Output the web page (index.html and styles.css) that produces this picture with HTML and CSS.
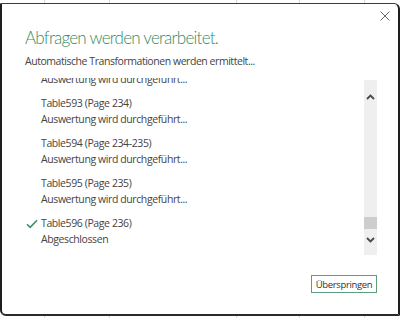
FILE: index.html
```html
<!DOCTYPE html>
<html lang="de">
<head>
<meta charset="utf-8">
<title>Abfragen werden verarbeitet</title>
<link rel="stylesheet" href="styles.css">
</head>
<body>
<div class="grid-strip top">
  <span class="cell c1"></span><span class="cell c2"></span><span class="cell c3"></span><span class="cell c4"></span><span class="cell c5"></span>
</div>
<div class="dialog">
  <button class="close" aria-label="Schließen">
    <svg width="10" height="10" viewBox="0 0 10 10"><path d="M0.5 0.5L9.5 9.5M9.5 0.5L0.5 9.5" stroke="#666" stroke-width="1" fill="none"/></svg>
  </button>
  <h1 class="title">Abfragen werden verarbeitet.</h1>
  <p class="subtitle">Automatische Transformationen werden ermittelt...</p>
  <div class="list-area">
    <div class="list-clip">
      <ul class="list">
        <li class="item partial"><span class="status">Auswertung wird durchgeführt...</span></li>
        <li class="item"><span class="name">Table593 (Page 234)</span><span class="status">Auswertung wird durchgeführt...</span></li>
        <li class="item"><span class="name">Table594 (Page 234-235)</span><span class="status">Auswertung wird durchgeführt...</span></li>
        <li class="item"><span class="name">Table595 (Page 235)</span><span class="status">Auswertung wird durchgeführt...</span></li>
        <li class="item done">
          <svg class="check" width="12" height="10" viewBox="0 0 12 10"><path d="M1 5.2L4.2 8.4L11 1.2" stroke="#3d8f66" stroke-width="1.6" fill="none"/></svg>
          <span class="name">Table596 (Page 236)</span><span class="status">Abgeschlossen</span>
        </li>
      </ul>
    </div>
    <div class="scrollbar">
      <svg class="arrow up" width="9" height="6" viewBox="0 0 9 6"><path d="M1 5L4.5 1.5L8 5" stroke="#4a4a4a" stroke-width="1.8" fill="none"/></svg>
      <div class="track"><div class="thumb"></div></div>
      <svg class="arrow down" width="9" height="6" viewBox="0 0 9 6"><path d="M1 1L4.5 4.5L8 1" stroke="#4a4a4a" stroke-width="1.8" fill="none"/></svg>
    </div>
  </div>
  <div class="footer">
    <button class="skip">Überspringen</button>
  </div>
</div>
<div class="grid-strip bottom">
  <span class="cell c1"></span><span class="cell c2"></span><span class="cell c3"></span><span class="cell c4"></span><span class="cell c5"></span>
</div>
</body>
</html>
```
FILE: styles.css
```css
html, body {
  margin: 0;
  padding: 0;
  background: #fff;
  width: 400px;
  height: 318px;
  overflow: hidden;
  font-family: "Open Sans", "Noto Sans", sans-serif;
}
.grid-strip {
  display: flex;
  height: 3px;
  background: #fff;
}
.grid-strip.bottom { height: 2px; }
.cell { border-right: 1px solid #dadada; }
.c1 { width: 44px; }
.c2 { width: 64px; }
.c3 { width: 126px; }
.c4 { width: 62px; }
.c5 { width: 64px; }
.dialog {
  position: relative;
  box-sizing: border-box;
  width: 400px;
  height: 313px;
  background: #fff;
  border: 1px solid #3c3c3c;
  border-left: 2px solid #1e1e1e;
  border-right: 2px solid #1e1e1e;
  border-bottom: 2px solid #2a2a2a;
  border-radius: 1px 6px 1px 6px;
  display: flex;
  flex-direction: column;
  padding: 0 0 0 23px;
}
.close {
  position: absolute;
  top: 6px;
  right: 7px;
  width: 12px;
  height: 12px;
  padding: 1px;
  border: 0;
  background: none;
  display: flex;
}
.title {
  margin: 22px 0 0 0;
  font-family: "Lato", "Open Sans", sans-serif;
  font-size: 17px;
  line-height: 24px;
  font-weight: 300;
  color: #368a60;
  letter-spacing: -0.75px;
}
.subtitle {
  margin: 3px 0 0 0;
  font-size: 10.5px;
  line-height: 16px;
  color: #444;
  letter-spacing: -0.45px;
}
.list-area {
  display: flex;
  margin-top: 9px;
  height: 177px;
  width: 352px;
}
.list-clip {
  flex: 1;
  overflow: hidden;
}
.list {
  list-style: none;
  margin: -6px 0 0 0;
  padding: 0;
}
.item {
  position: relative;
  display: flex;
  flex-direction: column;
  padding-left: 16px;
  height: 40px;
  font-size: 10.5px;
  line-height: 15.5px;
  color: #444;
  letter-spacing: -0.4px;
}
.item.partial { height: 24px; }
.check {
  position: absolute;
  left: 1px;
  top: 3px;
}
.scrollbar {
  width: 13px;
  margin-top: 2px;
  background: #efefef;
  display: flex;
  flex-direction: column;
  align-items: center;
}
.arrow { flex: none; }
.arrow.up { margin-top: 14px; }
.arrow.down { margin-bottom: 12px; }
.track {
  flex: 1;
  width: 13px;
  display: flex;
  flex-direction: column;
  justify-content: flex-end;
}
.thumb {
  height: 12px;
  background: #cdcdcd;
  margin-bottom: 8px;
}
.footer {
  display: flex;
  justify-content: flex-end;
  width: 352px;
  margin-top: 20px;
}
.skip {
  box-sizing: border-box;
  height: 18px;
  width: 66px;
  padding: 0;
  background: #fff;
  border: 1px solid #5e9f7f;
  font-family: "Open Sans", "Noto Sans", sans-serif;
  font-size: 9.5px;
  letter-spacing: -0.35px;
  color: #333;
}
```
